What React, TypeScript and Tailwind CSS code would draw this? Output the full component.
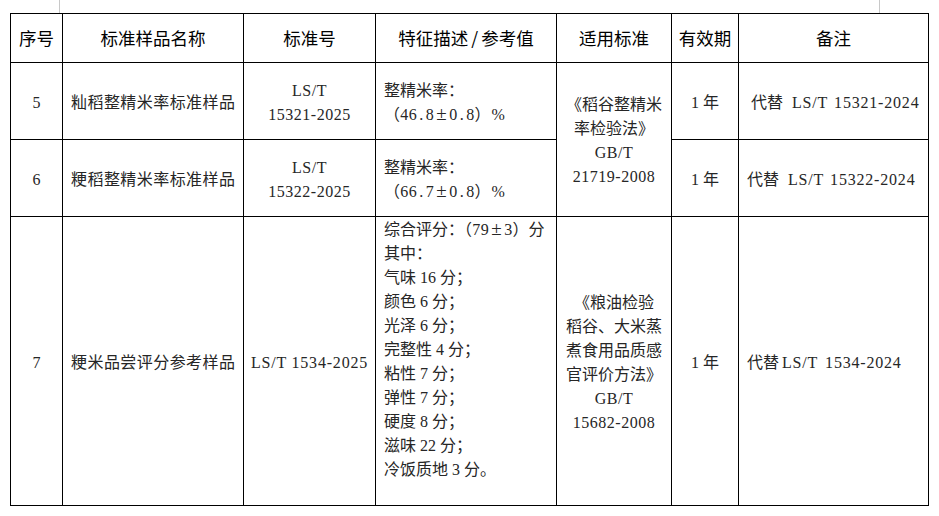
import React from "react";

const body =
  "font-['Liberation_Serif','Noto_Sans_CJK_SC',serif] text-[16px] leading-[24px] text-[#262626]";
const head =
  "font-['Noto_Sans_CJK_SC',sans-serif] text-[17.5px] leading-[24px] text-black font-normal";

const cell = "border border-black p-0 align-middle";

function N({ s }: { s: string }) {
  return (
    <>
      {s.split("").map((c, i) => (
        <span key={i} className="inline-block w-[8.5px] text-center">
          {c}
        </span>
      ))}
    </>
  );
}

function PM() {
  return (
    <span className="inline-block w-[15px] text-center text-[19px] leading-none font-['Liberation_Serif',serif]">
      ±
    </span>
  );
}

function Replace({ num, pl, g1, g2 }: { num: string; pl: string; g1: string; g2: string }) {
  return (
    <td className={`${cell} ${pl} pt-[3px] whitespace-nowrap`}>
      代替
      <span className={`${g1} tracking-[0.8px]`}>LS/T</span>
      <span className={`${g2} tracking-[0.8px]`}>{num}</span>
    </td>
  );
}

export default function App() {
  const headers = ["序号", "标准样品名称", "标准号", "特征描述/参考值", "适用标准", "有效期", "备注"];
  return (
    <div className="w-[939px] h-[516px] bg-white overflow-hidden">
      <div className="flex h-[13px]">
        <div className="w-[59px]" />
        <div className="w-px bg-[#c8c8c8]" />
        <div className="w-[819px]" />
        <div className="w-px bg-[#c8c8c8]" />
      </div>
      <table className="ml-[10px] w-[918px] table-fixed border-collapse">
        <colgroup>
          <col className="w-[52px]" />
          <col className="w-[181px]" />
          <col className="w-[132px]" />
          <col className="w-[181px]" />
          <col className="w-[115px]" />
          <col className="w-[67px]" />
          <col className="w-[190px]" />
        </colgroup>
        <thead>
          <tr className="h-[49px]">
            {headers.map((h) =>
              h.includes("/") ? (
                <th key={h} className={`${cell} ${head} text-center whitespace-nowrap`}>
                  特征描述<span className="inline-block w-[13px] text-center">/</span>参考值
                </th>
              ) : (
                <th key={h} className={`${cell} ${head} text-center`}>
                  {h}
                </th>
              )
            )}
          </tr>
        </thead>
        <tbody className={body}>
          <tr className="h-[77px]">
            <td className={`${cell} text-center pt-[3px]`}>5</td>
            <td className={`${cell} px-[8px] pt-[3px] text-justify [text-align-last:justify] whitespace-nowrap`}>
              籼稻整精米率标准样品
            </td>
            <td className={`${cell} text-center pt-[3px] tracking-[0.5px]`}>
              LS/T
              <br />
              15321-2025
            </td>
            <td className={`${cell} pl-[8px] pt-[3px] whitespace-nowrap`}>
              整精米率：
              <br />
              （<N s="46.8" />
              <PM />
              <N s="0.8" />）<span className="ml-[1px]">%</span>
            </td>
            <td rowSpan={2} className={`${cell} text-center pt-[3px] whitespace-nowrap`}>
              《稻谷整精米
              <br />
              率检验法》
              <br />
              <span className="tracking-[0.5px]">GB/T</span>
              <br />
              <span className="tracking-[0.5px]">21719-2008</span>
            </td>
            <td className={`${cell} text-center pt-[3px]`}>1 年</td>
            <Replace num="15321-2024" pl="pl-[12px]" g1="ml-[9px]" g2="ml-[6px]" />
          </tr>
          <tr className="h-[77px]">
            <td className={`${cell} text-center pt-[3px]`}>6</td>
            <td className={`${cell} px-[8px] pt-[3px] text-justify [text-align-last:justify] whitespace-nowrap`}>
              粳稻整精米率标准样品
            </td>
            <td className={`${cell} text-center pt-[3px] tracking-[0.5px]`}>
              LS/T
              <br />
              15322-2025
            </td>
            <td className={`${cell} pl-[8px] pt-[3px] whitespace-nowrap`}>
              整精米率：
              <br />
              （<N s="66.7" />
              <PM />
              <N s="0.8" />）<span className="ml-[1px]">%</span>
            </td>
            <td className={`${cell} text-center pt-[3px]`}>1 年</td>
            <Replace num="15322-2024" pl="pl-[8px]" g1="ml-[9px]" g2="ml-[6px]" />
          </tr>
          <tr className="h-[289px]">
            <td className={`${cell} text-center pt-[3px]`}>7</td>
            <td className={`${cell} px-[8px] pt-[3px] text-justify [text-align-last:justify] whitespace-nowrap`}>
              粳米品尝评分参考样品
            </td>
            <td className={`${cell} text-center pt-[3px] whitespace-nowrap tracking-[0.8px]`}>
              LS/T 1534-2025
            </td>
            <td className={`${cell} !align-top pl-[8px] pt-[1px] whitespace-nowrap`}>
              <div>
                综合评分：（<N s="79" />
                <PM />
                <N s="3" />）分
              </div>
              {[
                "其中：",
                "气味 16 分；",
                "颜色 6 分；",
                "光泽 6 分；",
                "完整性 4 分；",
                "粘性 7 分；",
                "弹性 7 分；",
                "硬度 8 分；",
                "滋味 22 分；",
                "冷饭质地 3 分。",
              ].map((l) => (
                <div key={l}>{l}</div>
              ))}
            </td>
            <td className={`${cell} text-center pt-[3px] whitespace-nowrap`}>
              《粮油检验
              <br />
              稻谷、大米蒸
              <br />
              煮食用品质感
              <br />
              官评价方法》
              <br />
              <span className="tracking-[0.5px]">GB/T</span>
              <br />
              <span className="tracking-[0.5px]">15682-2008</span>
            </td>
            <td className={`${cell} text-center pt-[3px]`}>1 年</td>
            <Replace num="1534-2024" pl="pl-[8px]" g1="ml-[3px]" g2="ml-[7px]" />
          </tr>
        </tbody>
      </table>
    </div>
  );
}
